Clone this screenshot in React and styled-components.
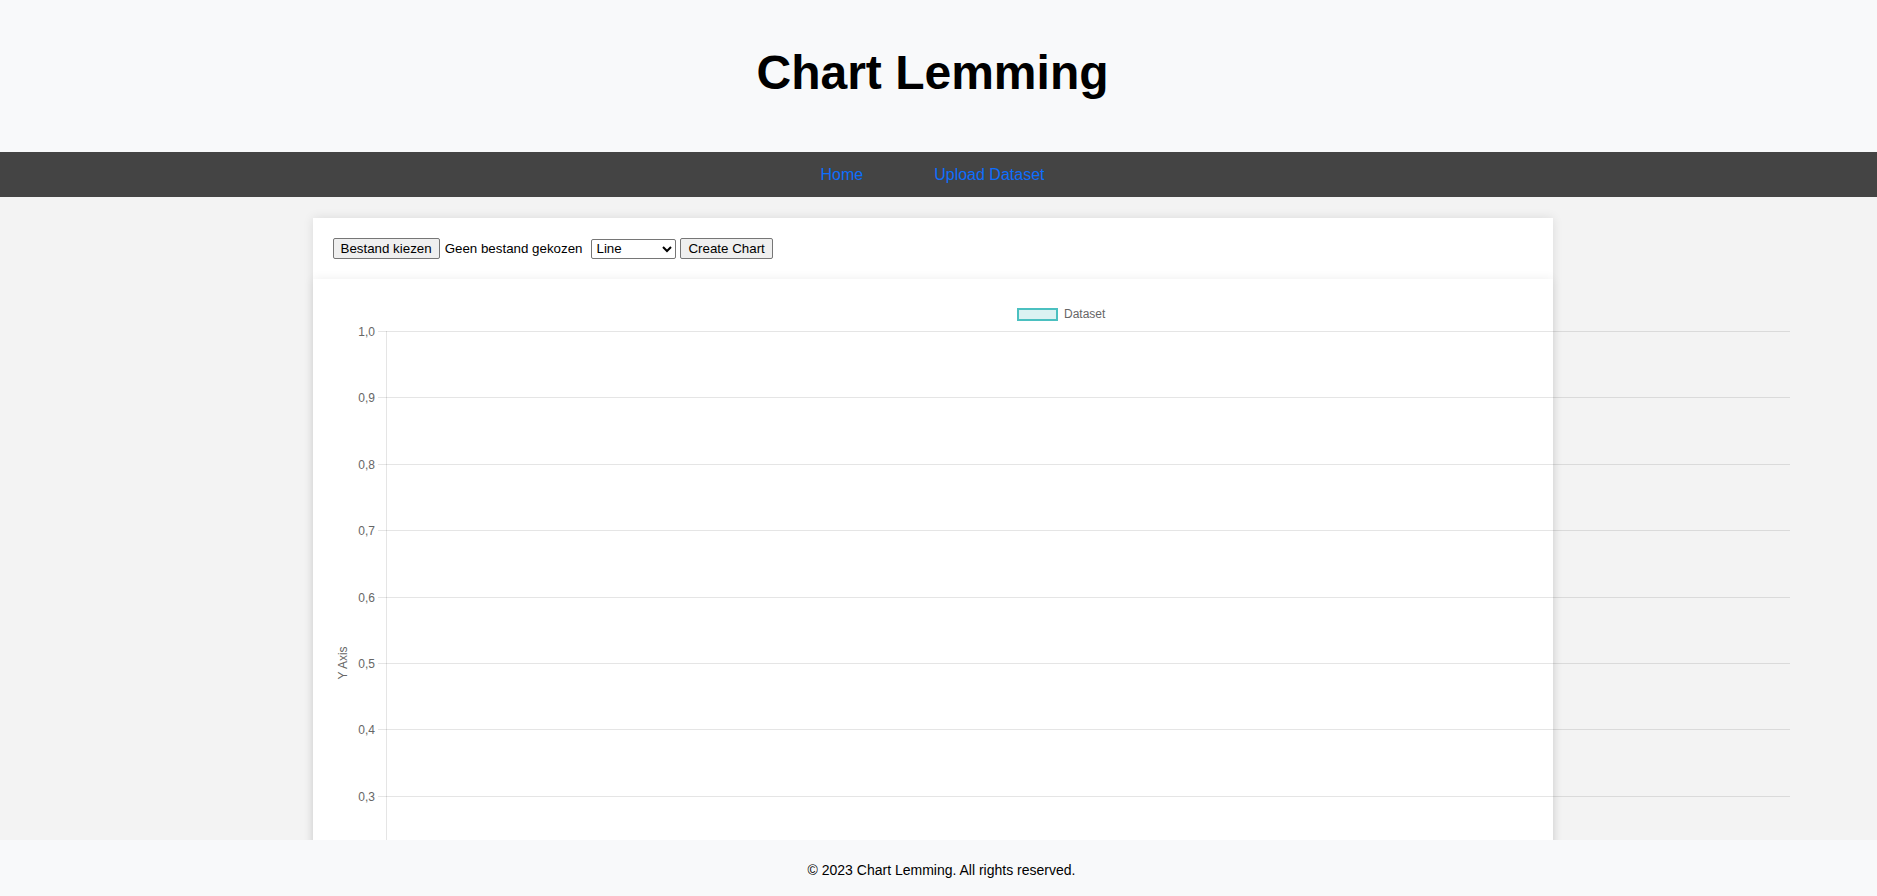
import React from "react";
import styled, { createGlobalStyle } from "styled-components";

const GlobalStyle = createGlobalStyle`
  html { overflow: hidden; }
  body {
    margin: 0;
    background: #f3f3f3;
    font-family: "Liberation Sans", Arial, sans-serif;
    color: #000;
  }
`;

// layout in the original sits a few px left of the viewport centre
const SHIFT = "12px";

const Header = styled.header`
  background: #f8f9fa;
  padding: 13px ${SHIFT} 20px 0;
  text-align: center;
  h1 {
    margin: 32px 0;
    font-size: 48px;
    font-weight: bold;
  }
`;

const Nav = styled.nav`
  background: #444;
  height: 45px;
  display: flex;
  align-items: center;
  justify-content: center;
  gap: 71px;
  padding-right: ${SHIFT};
`;

const NavLink = styled.a`
  color: #0d6efd;
  text-decoration: none;
  font-size: 16px;
`;

const Main = styled.main`
  padding: 21px ${SHIFT} 0 0;
  display: flex;
  justify-content: center;
`;

const Card = styled.section`
  width: 1240px;
  background: #fff;
  box-shadow: 0 0 10px rgba(0, 0, 0, 0.1);
`;

const Toolbar = styled.div`
  padding: 20px;
  display: flex;
  align-items: center;
  font-size: 13.33px;
`;

const NativeButton = styled.button`
  font-family: "Liberation Sans", Arial, sans-serif;
  font-size: 13.33px;
  height: 21px;
  padding: 1px 7px;
  border: 1px solid #767676;
  border-radius: 2px;
  background: #efefef;
  color: #000;
`;

const FileLabel = styled.span`
  margin-left: 5px;
  margin-right: 9px;
`;

const Select = styled.select`
  font-family: "Liberation Sans", Arial, sans-serif;
  font-size: 13.33px;
  width: 85px;
  height: 20px;
  border: 1px solid #767676;
  border-radius: 2px;
  background: #fff;
  color: #000;
  margin-right: 4px;
`;

const ChartBox = styled.div`
  position: relative;
  padding: 20px;
  background: #fff;
  box-shadow: 0 0 10px rgba(0, 0, 0, 0.07);
  overflow: visible;
`;

const ChartSvg = styled.svg`
  display: block;
  overflow: visible;
  font-family: "Liberation Sans", Arial, sans-serif;
`;

const Footer = styled.footer`
  position: fixed;
  left: 0;
  right: 0;
  bottom: 0;
  height: 56px;
  background: #f8f9fa;
  display: flex;
  align-items: center;
  justify-content: center;
  font-size: 14px;
  padding: 4px 0 0 6px;
  box-sizing: border-box;
`;

const W = 1457;
const H = 728;
const area = { left: 53, top: 32, right: 1457, bottom: 696 };
const grid = "rgba(0,0,0,0.1)";

function Chart() {
  const ticks = Array.from({ length: 11 }, (_, i) => 10 - i);
  const step = (area.bottom - area.top) / 10;
  return (
    <ChartSvg width={W} height={H} viewBox={`0 0 ${W} ${H}`}>
      <rect x="685" y="10" width="39" height="11" fill="rgba(75,192,192,0.2)" stroke="rgb(75,192,192)" strokeWidth="2" />
      <text x="731" y="19" fontSize="12" fill="#666">Dataset</text>
      {ticks.map((t, i) => {
        const y = Math.round(area.top + i * step) + 0.5;
        return (
          <g key={t}>
            <line x1={area.left - 8} x2={area.right} y1={y} y2={y} stroke={grid} />
            <text x={area.left - 11} y={y + 4} fontSize="12" fill="#666" textAnchor="end">
              {(t / 10).toFixed(1).replace(".", ",")}
            </text>
          </g>
        );
      })}
      <line x1={area.left + 0.5} x2={area.left + 0.5} y1={area.top} y2={area.bottom + 8} stroke={grid} />
      <text transform={`translate(14 ${(area.top + area.bottom) / 2}) rotate(-90)`} fontSize="12" fill="#666" textAnchor="middle">
        Y Axis
      </text>
    </ChartSvg>
  );
}

export default function App() {
  return (
    <>
      <GlobalStyle />
      <Header>
        <h1>Chart Lemming</h1>
      </Header>
      <Nav>
        <NavLink href="#">Home</NavLink>
        <NavLink href="#">Upload Dataset</NavLink>
      </Nav>
      <Main>
        <Card>
          <Toolbar>
            <NativeButton type="button">Bestand kiezen</NativeButton>
            <FileLabel>Geen bestand gekozen</FileLabel>
            <Select defaultValue="line">
              <option value="line">Line</option>
              <option value="bar">Bar</option>
              <option value="pie">Pie</option>
            </Select>
            <NativeButton type="button">Create Chart</NativeButton>
          </Toolbar>
          <ChartBox>
            <Chart />
          </ChartBox>
        </Card>
      </Main>
      <Footer>© 2023 Chart Lemming. All rights reserved.</Footer>
    </>
  );
}
